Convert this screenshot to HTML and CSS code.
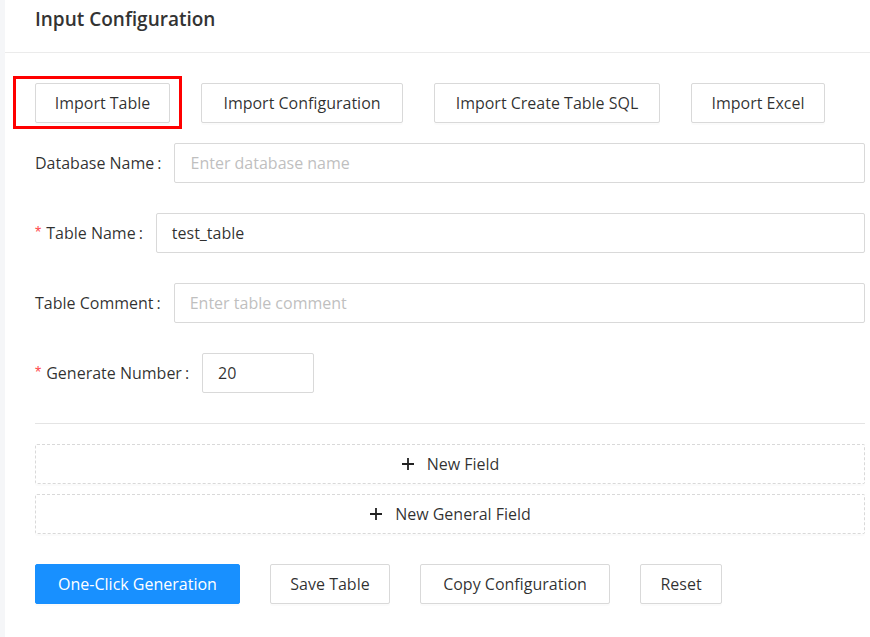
FILE: index.html
```html
<!DOCTYPE html>
<html>
<head>
<meta charset="utf-8">
<link rel="stylesheet" href="styles.css">
</head>
<body>
<div class="card">
  <div class="card-head">Input Configuration</div>
  <div class="card-body">
    <div class="import-row">
      <div class="highlight-wrap">
        <button class="btn w-import-table">Import Table</button>
        <span class="highlight"></span>
      </div>
      <button class="btn w-import-config">Import Configuration</button>
      <button class="btn w-import-sql">Import Create Table SQL</button>
      <button class="btn w-import-excel">Import Excel</button>
    </div>

    <div class="form-row">
      <label class="label">Database Name<span class="colon">:</span></label>
      <div class="input placeholder">Enter database name</div>
    </div>
    <div class="form-row">
      <label class="label"><span class="req">*</span>Table Name<span class="colon">:</span></label>
      <div class="input">test_table</div>
    </div>
    <div class="form-row">
      <label class="label">Table Comment<span class="colon">:</span></label>
      <div class="input placeholder">Enter table comment</div>
    </div>
    <div class="form-row">
      <label class="label"><span class="req">*</span>Generate Number<span class="colon">:</span></label>
      <div class="input small">20</div>
    </div>

    <div class="divider"></div>

    <div class="dashed-btn">
      <svg class="plus" width="14" height="14" viewBox="0 0 14 14"><path d="M7 1v12M1 7h12" stroke="#222" stroke-width="1.8" fill="none"/></svg>
      <span>New Field</span>
    </div>
    <div class="dashed-btn">
      <svg class="plus" width="14" height="14" viewBox="0 0 14 14"><path d="M7 1v12M1 7h12" stroke="#222" stroke-width="1.8" fill="none"/></svg>
      <span>New General Field</span>
    </div>

    <div class="action-row">
      <button class="btn primary w-gen">One-Click Generation</button>
      <button class="btn w-save">Save Table</button>
      <button class="btn w-copy">Copy Configuration</button>
      <button class="btn w-reset">Reset</button>
    </div>
  </div>
</div>
</body>
</html>
```
FILE: styles.css
```css
* { box-sizing: border-box; }
html, body {
  margin: 0;
  padding: 0;
  height: 100%;
}
body {
  background: #f5f6f8;
  padding-left: 5px;
  font-family: "Open Sans", "Noto Sans", sans-serif;
  font-size: 16px;
  color: rgba(0, 0, 0, 0.82);
  overflow: hidden;
}
.card {
  background: #fff;
  height: 100%;
}
.card-head {
  height: 53px;
  padding-left: 30px;
  padding-top: 6px;
  border-bottom: 1px solid #ebebeb;
  font-size: 19px;
  font-weight: 600;
  color: #333;
  line-height: 26px;
}
.card-body {
  padding: 30px 5px 0 30px;
}
.btn {
  height: 40px;
  border: 1px solid #d9d9d9;
  border-radius: 2px;
  background: #fff;
  font-family: inherit;
  font-size: 16px;
  color: rgba(0, 0, 0, 0.82);
  padding: 0;
  box-shadow: 0 2px 0 rgba(0, 0, 0, 0.016);
  cursor: pointer;
}
.import-row {
  display: flex;
  gap: 31px;
  margin-bottom: 20px;
}
.highlight-wrap {
  position: relative;
  display: flex;
}
.highlight {
  position: absolute;
  left: -22px;
  top: -7px;
  right: -12px;
  bottom: -6px;
  border: 3px solid #f00;
}
.w-import-table { width: 135px; }
.w-import-config { width: 202px; }
.w-import-sql { width: 226px; }
.w-import-excel { width: 134px; }

.form-row {
  display: flex;
  align-items: center;
  height: 40px;
  margin-bottom: 30px;
}
.label {
  white-space: nowrap;
  display: flex;
  align-items: center;
}
.req {
  color: #ff4d4f;
  margin-right: 5px;
  font-family: "Liberation Sans", sans-serif;
  font-size: 16px;
}
.colon {
  margin: 0 13px 0 3px;
}
.input {
  flex: 1;
  height: 40px;
  border: 1px solid #d9d9d9;
  border-radius: 2px;
  padding: 0 15px;
  display: flex;
  align-items: center;
}
.input.small {
  flex: none;
  width: 112px;
}
.placeholder {
  color: #bfbfbf;
}
.divider {
  height: 1px;
  background: #e4e4e4;
  margin-bottom: 20px;
}
.dashed-btn {
  height: 40px;
  border: 1px dashed #d9d9d9;
  border-radius: 2px;
  display: flex;
  align-items: center;
  justify-content: center;
  gap: 12px;
  margin-bottom: 10px;
  box-shadow: 0 2px 0 rgba(0, 0, 0, 0.016);
}
.plus { display: block; }
.action-row {
  display: flex;
  gap: 30px;
  margin-top: 30px;
}
.btn.primary {
  background: #1890ff;
  border-color: #1890ff;
  color: #fff;
}
.w-gen { width: 205px; }
.w-save { width: 120px; }
.w-copy { width: 190px; }
.w-reset { width: 82px; }
```
